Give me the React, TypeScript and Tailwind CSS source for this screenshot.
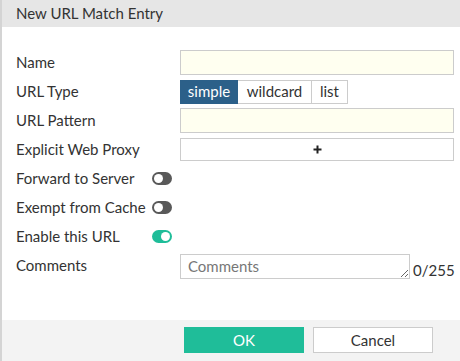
import React from 'react';

const Toggle: React.FC<{ on?: boolean }> = ({ on }) => (
   <div className={`w-[20px] h-[13px] rounded-full flex items-center px-[2px] ${on ? 'bg-[#1fbd99] justify-end' : 'bg-[#595959] justify-start'}`}>
      <div className="w-[9px] h-[9px] rounded-full bg-white"></div>
   </div>
);

const Row: React.FC<{ label: string; children?: React.ReactNode }> = ({ label, children }) => (
   <div className="h-[29px] flex items-center">
      <div className="w-[164px] shrink-0">{label}</div>
      {children}
   </div>
);

const App: React.FC = () => {
   return (
      <div className="w-[460px] h-[361px] flex flex-col bg-white border-l-2 border-[#d4d4d4] text-[15px] text-[#333] font-['Lato','Liberation_Sans',sans-serif]">
         <div className="h-[27px] shrink-0 flex items-center pl-[14px] bg-[#e6e6e6]">New URL Match Entry</div>

         <div className="flex-1 pt-[21px] pl-[14px] pr-[6px]">
            <Row label="Name">
               <input className="w-[274px] h-[25px] bg-[#fffff0] border border-[#ccc] outline-none" />
            </Row>
            <Row label="URL Type">
               <div className="flex h-[24px]">
                  <div className="w-[58px] bg-[#2c6089] text-white flex items-center justify-center">simple</div>
                  <div className="w-[74px] border border-l-0 border-[#ccc] flex items-center justify-center">wildcard</div>
                  <div className="w-[36px] border border-l-0 border-[#ccc] flex items-center justify-center">list</div>
               </div>
            </Row>
            <Row label="URL Pattern">
               <input className="w-[274px] h-[25px] bg-[#fffff0] border border-[#ccc] outline-none" />
            </Row>
            <Row label="Explicit Web Proxy">
               <div className="w-[274px] h-[23px] border border-[#ccc] flex items-center justify-center">
                  <svg width="9" height="9" viewBox="0 0 9 9">
                     <path d="M4.5 0.5v8M0.5 4.5h8" stroke="#222" strokeWidth="2" />
                  </svg>
               </div>
            </Row>
            <div className="h-[29px] flex items-center">
               <div className="w-[136px] shrink-0">Forward to Server</div>
               <Toggle />
            </div>
            <div className="h-[29px] flex items-center">
               <div className="w-[136px] shrink-0">Exempt from Cache</div>
               <Toggle />
            </div>
            <div className="h-[29px] flex items-center">
               <div className="w-[136px] shrink-0">Enable this URL</div>
               <Toggle on />
            </div>
            <Row label="Comments">
               <div className="flex items-end mt-[2px]">
                  <textarea
                     placeholder="Comments"
                     className="w-[230px] h-[25px] border border-[#ccc] px-[7px] py-0 leading-[22px] placeholder:text-[#777] outline-none"
                  />
                  <span className="ml-[3px] leading-[18px] text-[#333]">0/255</span>
               </div>
            </Row>
         </div>

         <div className="h-[41px] shrink-0 bg-[#f3f3f3] flex justify-end items-start pt-[7px] pr-[27px] gap-[9px]">
            <button className="w-[120px] h-[26px] bg-[#1fbd99] text-white">OK</button>
            <button className="w-[120px] h-[26px] bg-white border border-[#ccc]">Cancel</button>
         </div>
      </div>
   );
};

export default App;
